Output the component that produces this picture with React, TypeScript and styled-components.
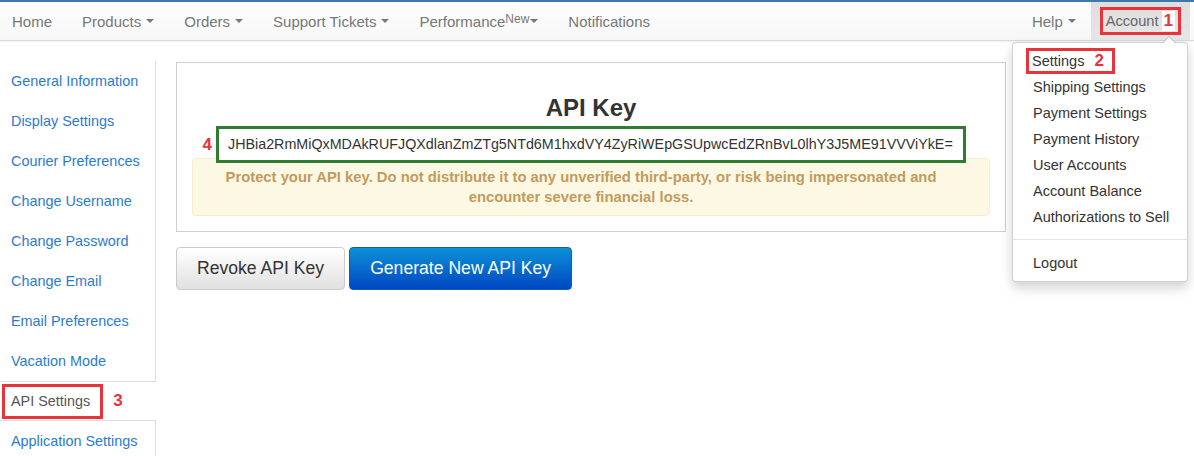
import React from "react";
import styled, { createGlobalStyle } from "styled-components";

const Global = createGlobalStyle`
  html, body { margin: 0; padding: 0; background: #fff; }
  body {
    font-family: "Liberation Sans", Arial, sans-serif;
    font-size: 14px;
    color: #333;
    overflow: hidden;
  }
  * { box-sizing: border-box; }
`;

const RED = "#e8333a";

const Page = styled.div`
  width: 1194px;
  height: 456px;
`;

const Navbar = styled.nav`
  display: flex;
  justify-content: space-between;
  height: 41px;
  border-top: 2px solid #3d7aa8;
  border-bottom: 1px solid #d9d9d9;
  background: linear-gradient(#ffffff, #f7f7f7);
  box-shadow: 0 1px 2px rgba(0, 0, 0, 0.06);
  padding-right: 4px;
  position: relative;
  z-index: 5;
  font-size: 15px;
`;

const NavList = styled.div`
  display: flex;
  margin-left: -3px;
`;

const NavItem = styled.div<{ $active?: boolean }>`
  position: relative;
  display: flex;
  align-items: center;
  padding: 0 ${(p) => (p.$active ? "9px" : "15px")};
  color: #777;
  white-space: nowrap;
  background: ${(p) => (p.$active ? "linear-gradient(#dedede, #e6e6e6)" : "transparent")};
`;

const Caret = styled.span<{ $tight?: boolean }>`
  display: inline-block;
  width: 0;
  height: 0;
  margin-left: ${(p) => (p.$tight ? 0 : 5)}px;
  border-top: 4px solid #777;
  border-left: 4px solid transparent;
  border-right: 4px solid transparent;
  vertical-align: middle;
`;

const Sup = styled.sup`
  font-size: 12px;
  position: relative;
  top: -2px;
  margin-right: 1px;
`;

const RedBox = styled.span<{ $pl?: number; $pr?: number }>`
  display: inline-flex;
  align-items: center;
  border: 3px solid ${RED};
  padding: 0 ${(p) => p.$pr ?? 3}px 0 ${(p) => p.$pl ?? 3}px;
`;

const Num = styled.span<{ $bg?: boolean; $ml?: number }>`
  color: ${RED};
  font-weight: bold;
  font-size: 17px;
  line-height: 20px;
  margin-left: ${(p) => p.$ml ?? 6}px;
  padding: 0 2px;
  background: ${(p) => (p.$bg ? "#fff" : "transparent")};
`;

const AccountBox = styled(RedBox)`
  height: 28px;
  color: #666;
  font-size: 14.6px;
`;

const Dropdown = styled.div`
  position: absolute;
  top: calc(100% + 2px);
  right: 2px;
  width: 176px;
  background: #fff;
  border: 1px solid rgba(0, 0, 0, 0.18);
  border-radius: 4px;
  box-shadow: 0 6px 12px rgba(0, 0, 0, 0.175);
  padding: 5px 0;
  color: #333;
  font-size: 14.5px;

  &::before {
    content: "";
    position: absolute;
    top: -7px;
    right: 11px;
    border-left: 7px solid transparent;
    border-right: 7px solid transparent;
    border-bottom: 7px solid rgba(0, 0, 0, 0.2);
  }
  &::after {
    content: "";
    position: absolute;
    top: -6px;
    right: 12px;
    border-left: 6px solid transparent;
    border-right: 6px solid transparent;
    border-bottom: 6px solid #fff;
  }
`;

const MenuItem = styled.div`
  padding: 3px 20px;
  line-height: 20px;
  white-space: nowrap;
`;

const MenuItemBoxed = styled.div`
  display: flex;
  padding: 0 0 0 13px;
  line-height: 20px;
`;

const Divider = styled.div`
  height: 1px;
  margin: 9px 0 10px;
  background: #e5e5e5;
`;

const Body = styled.div`
  display: flex;
  gap: 20px;
  padding-top: 20px;
`;

const Sidebar = styled.ul`
  list-style: none;
  margin: 0;
  padding: 0;
  width: 156px;
  flex: none;
  font-size: 14.4px;
`;

const SideItem = styled.li<{ $active?: boolean }>`
  display: flex;
  align-items: center;
  height: 40px;
  padding-left: ${(p) => (p.$active ? "2px" : "11px")};
  color: ${(p) => (p.$active ? "#555" : "#2a7bd0")};
  border-right: ${(p) => (p.$active ? "none" : "1px solid #ddd")};
  border-top: ${(p) => (p.$active ? "1px solid #ddd" : "none")};
  border-bottom: ${(p) => (p.$active ? "1px solid #ddd" : "none")};
  white-space: nowrap;
`;

const SideBox = styled(RedBox)`
  height: 35px;
  padding: 0 10px 0 6px;
`;

const Main = styled.div`
  width: 830px;
  padding-top: 1px;
`;

const Panel = styled.div`
  border: 1px solid #cfcfcf;
  padding: 0 15px 15px;
  display: flex;
  flex-direction: column;
  align-items: center;
`;

const Heading = styled.h2`
  margin: 32px 0 5px;
  font-size: 24px;
  line-height: 26px;
  font-weight: bold;
  color: #333;
`;

const KeyBox = styled.div`
  position: relative;
  z-index: 1;
  width: 750px;
  height: 37px;
  border: 3px solid #2e7d32;
  background: #fff;
  padding: 0 9px;
  line-height: 31px;
  font-size: 14.3px;
  color: #333;
  white-space: nowrap;
`;

const KeyNum = styled.span`
  position: absolute;
  right: calc(100% + 7px);
  top: 50%;
  transform: translateY(-50%);
  color: ${RED};
  font-weight: bold;
  font-size: 17px;
  line-height: 20px;
`;

const Alert = styled.div`
  align-self: stretch;
  margin-top: -5px;
  background: #fcf8e3;
  border: 1px solid #faebcc;
  border-radius: 4px;
  padding: 8px 35px 8px 15px;
  text-align: center;
  font-weight: bold;
  font-size: 14.8px;
  line-height: 20px;
  color: #c29b5d;
  white-space: nowrap;
`;

const ButtonRow = styled.div`
  display: flex;
  gap: 4px;
  margin-top: 15px;
`;

const Button = styled.button<{ $primary?: boolean }>`
  height: 43px;
  padding: 0 20px;
  font-family: "Liberation Sans", Arial, sans-serif;
  font-size: 17.6px;
  border-radius: 4px;
  border: 1px solid ${(p) => (p.$primary ? "#0b5db8" : "#cccccc")};
  color: ${(p) => (p.$primary ? "#fff" : "#333")};
  background: ${(p) =>
    p.$primary
      ? "linear-gradient(#0c91d8, #0047c2)"
      : "linear-gradient(#ffffff, #e1e1e1)"};
`;

const sideItems = [
  "General Information",
  "Display Settings",
  "Courier Preferences",
  "Change Username",
  "Change Password",
  "Change Email",
  "Email Preferences",
  "Vacation Mode",
];

const menuItems = [
  "Shipping Settings",
  "Payment Settings",
  "Payment History",
  "User Accounts",
  "Account Balance",
  "Authorizations to Sell",
];

export default function App() {
  return (
    <Page>
      <Global />
      <Navbar>
        <NavList>
          <NavItem>Home</NavItem>
          <NavItem>
            Products <Caret />
          </NavItem>
          <NavItem>
            Orders <Caret />
          </NavItem>
          <NavItem>
            Support Tickets <Caret />
          </NavItem>
          <NavItem>
            Performance<Sup>New</Sup>
            <Caret $tight />
          </NavItem>
          <NavItem>Notifications</NavItem>
        </NavList>
        <NavList>
          <NavItem>
            Help <Caret />
          </NavItem>
          <NavItem $active>
            <AccountBox>
              Account
              <Num $bg $ml={3}>
                1
              </Num>
            </AccountBox>
            <Dropdown>
              <MenuItemBoxed>
                <RedBox $pl={3} $pr={6}>
                  Settings
                  <Num $ml={8}>2</Num>
                </RedBox>
              </MenuItemBoxed>
              {menuItems.map((m) => (
                <MenuItem key={m}>{m}</MenuItem>
              ))}
              <Divider />
              <MenuItem>Logout</MenuItem>
            </Dropdown>
          </NavItem>
        </NavList>
      </Navbar>
      <Body>
        <Sidebar>
          {sideItems.map((s) => (
            <SideItem key={s}>{s}</SideItem>
          ))}
          <SideItem $active>
            <SideBox>API Settings</SideBox>
            <Num $ml={8}>3</Num>
          </SideItem>
          <SideItem>Application Settings</SideItem>
        </Sidebar>
        <Main>
          <Panel>
            <Heading>API Key</Heading>
            <KeyBox>
              <KeyNum>4</KeyNum>
              JHBia2RmMiQxMDAkRUFJQXdlanZmZTg5NTd6M1hxdVY4ZyRiWEpGSUpwcEdZRnBvL0lhY3J5ME91VVViYkE=
            </KeyBox>
            <Alert>
              Protect your API key. Do not distribute it to any unverified third-party, or risk being
              impersonated and
              <br />
              encounter severe financial loss.
            </Alert>
          </Panel>
          <ButtonRow>
            <Button>Revoke API Key</Button>
            <Button $primary>Generate New API Key</Button>
          </ButtonRow>
        </Main>
      </Body>
    </Page>
  );
}
